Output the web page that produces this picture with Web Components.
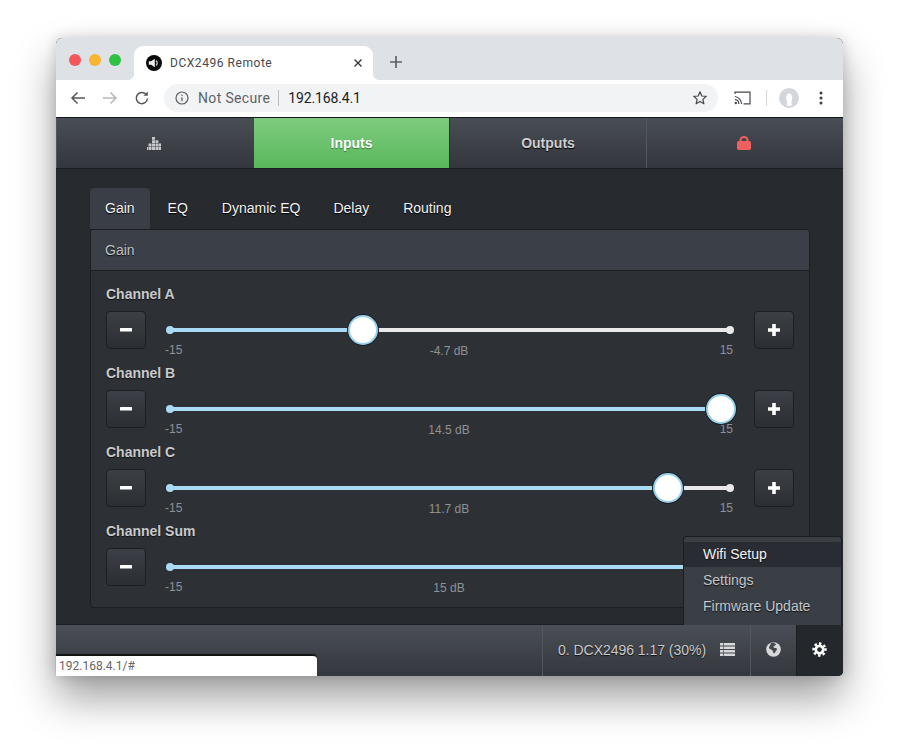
<!doctype html>
<html><head><meta charset="utf-8"><title>DCX2496 Remote</title>
<style>html,body{margin:0;background:#fff;height:100%}body{font-family:"Liberation Sans",Arial,sans-serif;overflow:hidden}</style>
</head><body>
<browser-window>
  <browser-chrome></browser-chrome>
  <app-nav></app-nav>
  <app-main>
    <tab-bar></tab-bar>
    <gain-panel title="Gain">
      <channel-row label="Channel A" value="-4.7"></channel-row>
      <channel-row label="Channel B" value="14.5"></channel-row>
      <channel-row label="Channel C" value="11.7"></channel-row>
      <channel-row label="Channel Sum" value="15" covered></channel-row>
    </gain-panel>
  </app-main>
  <app-footer></app-footer>
  <drop-menu></drop-menu>
  <status-bubble>192.168.4.1/#</status-bubble>
</browser-window>
<script>
function def(name, html){
  customElements.define(name, class extends HTMLElement{
    connectedCallback(){
      if(this.shadowRoot) return;
      const r=this.attachShadow({mode:'open'});
      r.innerHTML = typeof html==='function'?html(this):html;
    }
  });
}
def('browser-window',`<style>
:host{display:flex;flex-direction:column;position:relative;width:787px;height:638px;margin:38px 0 0 56px;border-radius:6px 6px 5px 5px;background:#272a2e;box-shadow:0 22px 42px rgba(0,0,0,.38),0 0 14px rgba(0,0,0,.16)}
</style><slot></slot>`);
def('browser-chrome',`<style>
:host{display:block;flex:none;height:79px;font-family:Roboto,"Liberation Sans",sans-serif;border-bottom:1px solid #16181b;box-sizing:content-box}
.strip{height:42px;background:#dee1e6;border-radius:6px 6px 0 0;display:flex;align-items:flex-end;box-sizing:border-box}
.lights{display:flex;gap:8px;width:78px;flex:none;box-sizing:border-box;padding:0 0 14px 13px;align-self:flex-end}
.lights i{width:12px;height:12px;border-radius:50%}
.tab{position:relative;width:239px;height:34px;background:#fff;border-radius:9px 9px 0 0;display:flex;align-items:center;box-sizing:border-box;padding:0 10px 0 12px;font-size:12px;letter-spacing:.55px;color:#45484c;flex:none}
.tab::before,.tab::after{content:"";position:absolute;bottom:0;width:7px;height:7px}
.tab::before{left:-7px;background:radial-gradient(circle at 0 0,transparent 7px,#fff 7.500px)}
.tab::after{right:-7px;background:radial-gradient(circle at 100% 0,transparent 7px,#fff 7.500px)}
.tab span{flex:1;margin-left:8px;white-space:nowrap}
.plus{margin:0 0 11px 16px;display:flex}
.bar{height:37px;background:#fff;display:flex;align-items:center;box-sizing:border-box;padding:0 0 1px 14px}
.nav{display:flex;gap:16px;align-items:center;width:94px;flex:none}
.omni{width:554px;height:28px;background:#f1f3f4;border-radius:14px;display:flex;align-items:center;padding:0 10px 0 11px;box-sizing:border-box;font-size:14px;flex:none}
.ns{color:#5f6368;margin-left:9px;letter-spacing:.35px}
.sep{width:1px;height:16px;background:#b9bcc0;margin:0 9px 0 8px}
.url{color:#202124;flex:1;letter-spacing:-.15px}
.right{display:flex;align-items:center;flex:1;padding-left:16px}
.vs{width:1px;height:16px;background:#d6d8db;margin:0 12px 0 15px}
svg{display:block;flex:none}
</style>
<div class="strip">
 <div class="lights"><i style="background:#f4575a"></i><i style="background:#f8b52f"></i><i style="background:#2fc143"></i></div>
 <div class="tab">
  <svg width="16" height="16" viewBox="0 0 16 16"><circle cx="8" cy="8" r="8" fill="#0a0a0a"/><path d="M2.800 6.200h2.300L8.800 3.800v8.400L5.100 9.800H2.800z" fill="#eee"/><path d="M10 5.500a3.200 3.200 0 0 1 0 5" stroke="#c4c4c4" fill="none" stroke-width="1.300"/></svg>
  <span>DCX2496 Remote</span>
  <svg width="10" height="10" viewBox="0 0 10 10"><path d="M1.500 1.500l7 7M8.500 1.500l-7 7" stroke="#333" stroke-width="1.300"/></svg>
 </div>
 <div class="plus"><svg width="14" height="14" viewBox="0 0 14 14"><path d="M7 1v12M1 7h12" stroke="#5f6368" stroke-width="1.700"/></svg></div>
</div>
<div class="bar">
 <div class="nav">
  <svg width="16" height="16" viewBox="0 0 16 16"><path d="M15 8H2M7.500 2.500L2 8l5.500 5.500" fill="none" stroke="#55585c" stroke-width="1.500"/></svg>
  <svg width="16" height="16" viewBox="0 0 16 16"><path d="M1 8h13M8.500 2.500L14 8l-5.500 5.500" fill="none" stroke="#b4b6b9" stroke-width="1.500"/></svg>
  <svg width="16" height="16" viewBox="0 0 16 16"><path d="M13.500 8.500A5.600 5.600 0 1 1 12 4.200" fill="none" stroke="#55585c" stroke-width="1.500"/><path d="M13.800 1.500v4.300H9.500z" fill="#55585c"/></svg>
 </div>
 <div class="omni">
  <svg width="14" height="14" viewBox="0 0 14 14"><circle cx="7" cy="7" r="6" fill="none" stroke="#5f6368" stroke-width="1.200"/><path d="M7 6.300v4M7 3.800v1.300" stroke="#5f6368" stroke-width="1.300"/></svg>
  <span class="ns">Not Secure</span><i class="sep"></i><span class="url">192.168.4.1</span>
  <svg width="16" height="16" viewBox="0 0 16 16"><path d="M8 1.800l1.800 4.200 4.500.4-3.400 3 1 4.400L8 11.500l-3.900 2.300 1-4.400-3.400-3 4.500-.4z" fill="none" stroke="#45484c" stroke-width="1.200" stroke-linejoin="round"/></svg>
 </div>
 <div class="right">
  <svg width="17" height="14" viewBox="0 0 17 14"><path d="M1 3V1.200h15v11.600H9.500" fill="none" stroke="#45484c" stroke-width="1.200"/><path d="M1 5.500a7.500 7.500 0 0 1 6.500 7.500M1 8.300a4.700 4.700 0 0 1 3.800 4.700" fill="none" stroke="#45484c" stroke-width="1.200"/><circle cx="1.800" cy="12" r="1.200" fill="#45484c"/></svg>
  <i class="vs"></i>
  <svg width="20" height="20" viewBox="0 0 20 20"><circle cx="10" cy="10" r="10" fill="#d3d6da"/><path d="M7.300 17c1.400-1.200.9-3.200.2-5-1-3 .2-6.500 2.700-6.500s3.700 3.500 2.700 6.500c-.6 1.800-.5 3.600.3 4.700C11.500 18.500 9 18.500 7.300 17z" fill="#fff"/></svg>
  <svg style="margin-left:20px" width="4" height="14" viewBox="0 0 4 14"><circle cx="2" cy="2" r="1.500" fill="#3c4043"/><circle cx="2" cy="7" r="1.500" fill="#3c4043"/><circle cx="2" cy="12" r="1.500" fill="#3c4043"/></svg>
 </div>
</div>`);
def('app-nav',`<style>
:host{display:grid;flex:none;grid-template-columns:198px 196px 196px 197px;height:50px;font-size:14px;font-weight:bold;border-bottom:1px solid #1b1d21;box-sizing:content-box}
a{display:flex;align-items:center;justify-content:center;background:linear-gradient(#494d55,#33363c);color:#cfcfcf;border-left:1px solid #52565d;box-sizing:border-box;text-shadow:0 1px 1px #000}
a:first-child{border-left:0}
.on{background:linear-gradient(#7fcb7f,#59b85b);color:#fff;border-left:0;border-right:1px solid #2f3236;text-shadow:0 1px 1px #3c7a3c}
.on+a{border-left:0}
svg{display:block}
</style>
<a><svg style="margin-right:3px" width="14" height="13" viewBox="0 0 14 13" fill="#c6c8cb"><path d="M5 0h3v2.800H5zM5 3.300h3v2.800H5zM8.500 3.300h2.800v2.800H8.500zM1.500 6.600h3v2.800h-3zM5 6.600h3v2.800H5zM8.500 6.600h2.800v2.800H8.500zM11.700 6.600h2.300v2.800h-2.300zM0 10h1v3H0zM1.500 10h3v3h-3zM5 10h3v3H5zM8.500 10h2.800v3H8.500zM11.700 10h2.300v3h-2.300z"/></svg></a>
<a class="on">Inputs</a><a>Outputs</a>
<a><svg style="margin-right:2px" width="14" height="14" viewBox="0 0 14 14"><path d="M3.500 6V4a3.500 3 0 0 1 7 0v2" fill="none" stroke="#ee5f5f" stroke-width="2"/><rect y="5" width="14" height="9" rx="1.800" fill="#ee5f5f"/></svg></a>`);
def('app-main',`<style>
:host{display:block;flex:none;background:#272a2e;padding:19px 33px 0 34px;border-bottom:1px solid #1b1d21;box-sizing:content-box;height:436px}
</style><slot></slot>`);
def('tab-bar',`<style>
:host{display:flex;height:41px;font-size:14px;color:#f2f2f2;text-shadow:0 1px 1px #000}
a{display:flex;align-items:center;padding:0 17px 1px;border-radius:4px 4px 0 0}
.on{background:#3a3f47;padding:0 15px 1px;color:#f0f0f0}
</style><a class="on">Gain</a><a style="padding-left:18px">EQ</a><a>Dynamic EQ</a><a style="padding-left:16px">Delay</a><a>Routing</a>`);
def('gain-panel',h=>`<style>
:host{display:block;width:720px;height:379px;box-sizing:border-box;background:#2d3136;border:1px solid #1c1e22;border-radius:0 4px 4px 4px}
.h{height:40px;background:#3a3f48;border-bottom:1px solid #1c1e22;display:flex;align-items:center;padding:0 15px 0 14px;font-size:14px;color:#bfc2c6;border-radius:3px 3px 0 0;text-shadow:0 1px 1px #111}
.b{padding:13px 15px 0}
</style><div class="h">${h.getAttribute('title')}</div><div class="b"><slot></slot></div>`);
def('channel-row',h=>{
 const v=parseFloat(h.getAttribute('value')); const pct=(v+15)/30;
 const left=(pct*559.4+.5).toFixed(1);
 const covered=h.hasAttribute('covered');
 return `<style>
:host{display:block;height:79px;color:#ccc}
.l{height:20px;line-height:20px;font-size:14px;font-weight:bold;color:#c8cacc;margin-bottom:7px;text-shadow:0 1px 1px #111}
.c{display:flex;height:38px}
.btn{flex:none;width:40px;height:38px;box-sizing:border-box;border:1px solid #1d1f23;border-radius:4px;background:linear-gradient(#3c3f45,#2b2e33);display:flex;align-items:center;justify-content:center}
.s{flex:1;padding:0 24px;position:relative;min-width:0}
.tr{position:relative;height:38px}
.line{position:absolute;left:0;right:0;top:17px;height:4px;background:#e9e9e9;border-radius:2px}
.fill{position:absolute;left:0;top:17px;height:4px;background:#a9dcf4;border-radius:2px;width:${left}px}
.dot{position:absolute;top:15px;width:8px;height:8px;border-radius:50%;background:#e9e9e9}
.thumb{position:absolute;top:4px;width:26px;height:26px;margin-left:-15px;border:2px solid #96d0ec;border-radius:50%;background:#fff;left:${left}px;box-shadow:0 0 0 1px #1d2024}
.t{display:grid;grid-template-columns:1fr auto 1fr;margin:-6px -3px 0 -5px;font-size:12px;line-height:14px;color:#8e9195}
.t span:nth-child(2){padding-top:1px}
.t span:last-child{text-align:right}
</style><div class="l">${h.getAttribute('label')}</div>
<div class="c">
<div class="btn"><svg width="12" height="4" viewBox="0 0 12 4"><rect width="12" height="3.500" rx=".5" fill="#fff"/></svg></div>
<div class="s"><div class="tr"><i class="line"></i><i class="fill"></i><i class="dot" style="left:-4px;background:#a9dcf4"></i><i class="dot" style="right:-4px"></i><i class="thumb"></i></div>
<div class="t"><span>-15</span><span>${h.getAttribute('value')} dB</span><span>${covered?'':'15'}</span></div></div>
<div class="btn"><svg width="14" height="14" viewBox="0 0 14 14"><path d="M5.200 1h3.600v4.200H13v3.600H8.800V13H5.200V8.800H1V5.200h4.200z" fill="#fff"/></svg></div>
</div>`});
def('app-footer',`<style>
:host{display:flex;flex:none;height:51px;background:linear-gradient(#4a4e56,#34373d);font-size:14px;color:#c8cacc;justify-content:flex-end;align-items:stretch;border-radius:0 0 5px 5px}
div{display:flex;align-items:center;justify-content:center;border-left:1px solid #52565d;box-sizing:border-box;padding-bottom:3px}
.d{width:208px;padding-left:15px;padding-right:15px;justify-content:space-between;white-space:nowrap;text-shadow:0 1px 1px #111}
.d span{padding-top:2px;letter-spacing:-.03px}
.g{width:46px}.s{width:47px;background:#24272c;border-left:1px solid #1c1e22;border-radius:0 0 5px 0;padding-right:2px}
svg{display:block}
</style>
<div class="d"><span>0. DCX2496 1.17 (30%)</span><svg width="15" height="13" viewBox="0 0 15 13" fill="#d6d8da"><path d="M0 0h3v2.400H0zM3.600 0H15v2.400H3.600zM0 3.500h3v2.400H0zM3.600 3.500H15v2.400H3.600zM0 7h3v2.400H0zM3.600 7H15v2.400H3.600zM0 10.500h3v2.400H0zM3.600 10.500H15v2.400H3.600z"/></svg></div>
<div class="g"><svg width="15" height="15" viewBox="0 0 15 15"><circle cx="7.500" cy="7.500" r="7.300" fill="#d6d8da"/><path d="M5 1c2-.5 4 0 5 1.500-.5 1.500-2 1-2.500 2s1.500 1.500 2.500 1.500 1.500 1.500 0 3c-1 1-1 2-2 2.500-1-1-1-2.500-2-3.500S2.800 7 3 5.500 4.500 3.500 5 1z" fill="#44484f"/></svg></div>
<div class="s"><svg width="15" height="15" viewBox="0 0 24 24"><circle cx="12" cy="12" r="6" fill="none" stroke="#fff" stroke-width="4.400"/><circle cx="12" cy="12" r="9.500" fill="none" stroke="#fff" stroke-width="4" stroke-dasharray="3.900 3.560" transform="rotate(-11.800 12 12)"/></svg></div>`);
def('drop-menu',`<style>
:host{position:absolute;right:1px;top:498px;width:159px;height:89px;background:#3a3e45;border:1px solid #1c1e22;border-bottom:0;box-sizing:border-box;border-radius:4px 4px 0 0;padding-top:5px;font-size:14px;color:#c5c7ca;text-shadow:0 1px 1px #111}
a{display:flex;align-items:center;height:26px;padding-left:19px}
.on{background:#292c32;color:#f4f4f4;height:25px;padding-bottom:1px;box-sizing:border-box}
</style><a class="on">Wifi Setup</a><a>Settings</a><a>Firmware Update</a>`);
def('status-bubble',`<style>
:host{position:absolute;left:0;bottom:0;width:261px;height:21px;box-sizing:border-box;background:#fff;border-top:1px solid #111;border-radius:0 4px 0 0;box-shadow:0 -1px 1px rgba(0,0,0,.7);font-size:12px;line-height:20px;padding-left:3px;color:#666;font-family:Roboto,"Liberation Sans",sans-serif}
</style><slot></slot>`);
</script>
</body></html>
